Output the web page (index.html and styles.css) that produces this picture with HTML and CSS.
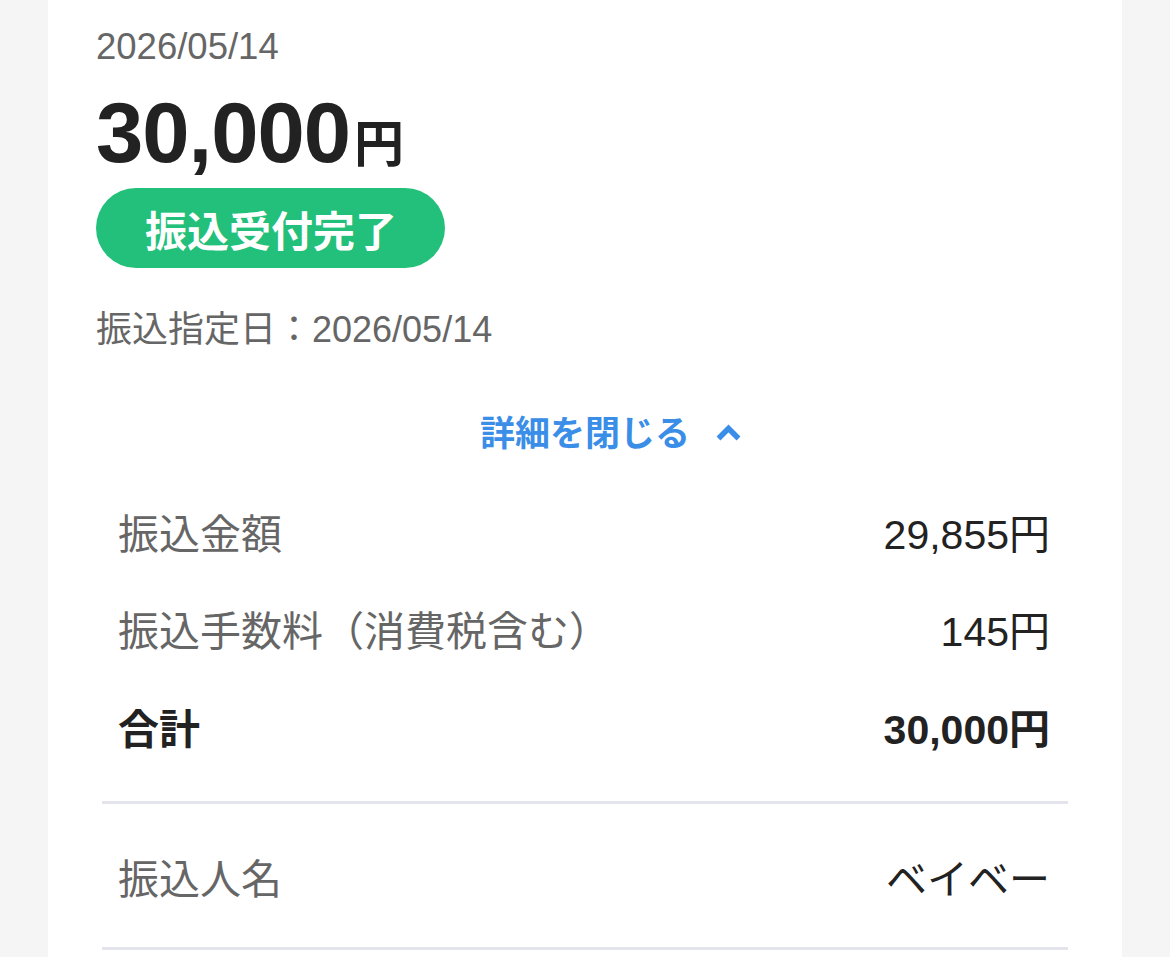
FILE: index.html
```html
<!DOCTYPE html>
<html lang="ja">
<head>
<meta charset="utf-8">
<title>振込受付完了</title>
<link rel="stylesheet" href="styles.css">
</head>
<body>
<main class="card">
  <div class="date">2026/05/14</div>
  <div class="amount">30,000<span class="yen">円</span></div>
  <div class="badge">振込受付完了</div>
  <div class="scheduled">振込指定日：2026/05/14</div>
  <div class="toggle">
    <span class="toggle-text">詳細を閉じる</span>
    <svg class="chevron" width="25" height="17" viewBox="0 0 25 17" aria-hidden="true">
      <polyline points="2.5,14.5 12.5,4.5 22.5,14.5" fill="none" stroke="#3a8ee8" stroke-width="5.5" stroke-linejoin="miter" stroke-linecap="butt"/>
    </svg>
  </div>
  <section class="details">
    <div class="rows">
      <div class="row"><span class="label">振込金額</span><span class="value">29,855円</span></div>
      <div class="row"><span class="label">振込手数料（消費税含む）</span><span class="value">145円</span></div>
      <div class="row total"><span class="label">合計</span><span class="value">30,000円</span></div>
    </div>
    <div class="divider"></div>
    <div class="row name-row"><span class="label">振込人名</span><span class="value">ベイベー</span></div>
    <div class="divider"></div>
  </section>
</main>
</body>
</html>
```

FILE: styles.css
```css
html, body {
  margin: 0;
  padding: 0;
}
body {
  background: #f5f5f5;
  font-family: "Liberation Sans", "Noto Sans CJK JP", sans-serif;
  color: #222222;
}
.card {
  margin: 0 48px;
  background: #ffffff;
  min-height: 957px;
  padding: 25px 48px 0 48px;
  box-sizing: border-box;
}
.date {
  font-size: 36.5px;
  line-height: 43px;
  color: #666666;
}
.amount {
  margin-top: 15px;
  font-size: 85px;
  line-height: 100px;
  font-weight: 700;
  color: #222222;
  letter-spacing: -1px;
}
.yen {
  font-size: 50px;
  line-height: 1;
  letter-spacing: 0;
  margin-left: 4px;
}
.badge {
  margin-top: 5px;
  display: inline-flex;
  align-items: center;
  height: 80px;
  padding: 0 48px 0 49px;
  border-radius: 40px;
  background: #22c07a;
  color: #ffffff;
  font-size: 42px;
  font-weight: 700;
  box-sizing: border-box;
}
.scheduled {
  margin-top: 40px;
  font-size: 36px;
  line-height: 43px;
  color: #666666;
}
.toggle {
  margin-top: 61px;
  display: flex;
  justify-content: center;
  align-items: center;
  gap: 26px;
  padding-left: 51px;
  color: #3a8ee8;
  font-size: 35px;
  line-height: 43px;
  font-weight: 700;
}
.chevron {
  display: block;
  margin-top: -3px;
}
.details {
  margin: 31px 6px 0 6px;
}
.row {
  display: flex;
  justify-content: space-between;
  align-items: center;
  height: 97.5px;
  padding: 0 18px 0 16px;
  font-size: 41px;
  line-height: 48px;
}
.label {
  color: #666666;
}
.value {
  color: #222222;
}
.total .label,
.total .value {
  color: #222222;
  font-weight: 700;
}
.divider {
  height: 3px;
  background: #e4e4ec;
}
.rows {
  margin-bottom: 22px;
}
.name-row {
  height: auto;
  padding-top: 52px;
  padding-bottom: 43px;
}
```
